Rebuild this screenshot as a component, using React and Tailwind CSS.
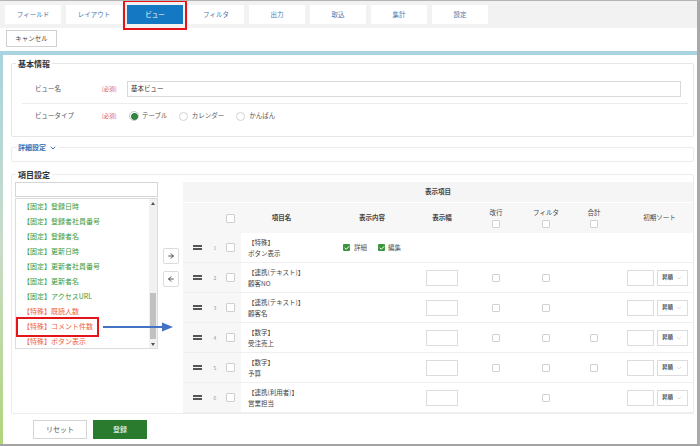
import React from "react";
import { ArrowRight, ArrowLeft, ChevronDown, Check } from "lucide-react";

const cols =
  "grid grid-cols-[27px_10px_21px_81px_100px_40px_68px_32px_64px_67px]";

const tabs = ["フィールド", "レイアウト", "ビュー", "フィルタ", "出力", "取込", "集計", "設定"];

const fixedItems = ["登録日時", "登録者社員番号", "登録者名", "更新日時", "更新者社員番号", "更新者名", "アクセスURL"];
const specialItems = ["既読人数", "コメント件数", "ボタン表示"];

const rows = [
  { n: 1, type: "【特殊】", name: "ボタン表示", content: true },
  { n: 2, type: "【連携(テキスト)】", name: "顧客NO", width: true, wrap: true, filter: true, sort: true },
  { n: 3, type: "【連携(テキスト)】", name: "顧客名", width: true, wrap: true, filter: true, sort: true },
  { n: 4, type: "【数字】", name: "受注売上", width: true, wrap: true, filter: true, sum: true, sort: true },
  { n: 5, type: "【数字】", name: "予算", width: true, wrap: true, filter: true, sum: true, sort: true },
  { n: 6, type: "【連携(利用者)】", name: "営業担当", width: true, filter: true, sort: true },
];

function Box({ big }) {
  return (
    <span
      className={
        big
          ? "block w-[9px] h-[9px] border border-[#cfcfcf] bg-white rounded-[1px]"
          : "block w-[8px] h-[8px] border border-[#d2d2d2] bg-white rounded-[1px]"
      }
    />
  );
}

function GreenCheck() {
  return (
    <span className="flex items-center justify-center w-[7px] h-[7px] bg-[#3a963c] rounded-[1px]">
      <Check className="w-[6px] h-[6px] text-white" strokeWidth={4} />
    </span>
  );
}

function Radio({ on }) {
  return on ? (
    <span className="flex items-center justify-center w-[10px] h-[10px] rounded-full border border-[#c8c8c8] bg-white">
      <span className="block w-[7px] h-[7px] rounded-full bg-[#2f8a3c] border border-[#24702f]" />
    </span>
  ) : (
    <span className="block w-[9px] h-[9px] rounded-full border border-[#d4d4d4] bg-white" />
  );
}

function Required() {
  return <span className="w-[25px] text-[5.5px] text-[#d9534f]">[必須]</span>;
}

export default function App() {
  return (
    <div className="w-[700px] h-[446px] overflow-hidden bg-white flex flex-col border-t border-t-[#b4b4b4] border-r-[3px] border-r-[#a9a9a9] border-b-[2px] border-b-[#a3a3a3] font-['Noto_Sans_CJK_JP','Noto_Sans',sans-serif] text-[#555]">
      {/* Tabs */}
      <div className="h-[27px] shrink-0 bg-[#f2f2f2] pl-[5px] pt-[4px] flex items-start gap-[5px]">
        {tabs.map((t) =>
          t === "ビュー" ? (
            <div key={t} className="relative w-[56px] h-[19px] bg-[#1479c2] text-white text-[6.5px] flex items-center justify-center">
              {t}
              <span className="absolute -left-[4px] -right-[4px] -top-[5px] -bottom-[6px] border-2 border-[#e3151a]" />
            </div>
          ) : (
            <div key={t} className="w-[56px] h-[19px] bg-white text-[#5474a8] text-[6.5px] flex items-center justify-center">
              {t}
            </div>
          )
        )}
      </div>

      {/* Cancel */}
      <div className="h-[23px] shrink-0 pl-[6px] pt-[2px] flex items-start">
        <button className="w-[51px] h-[17px] border border-[#d0d0d0] bg-white text-[6.5px] leading-[15px] text-[#444]">
          キャンセル
        </button>
      </div>

      {/* Panel */}
      <div className="flex-1 flex bg-gradient-to-b from-[#a9d3df] via-[#c9dcc8] to-[#b1d47a] pl-[3px] pt-[4px]">
        <div className="flex-1 bg-white flex flex-col">
          {/* 基本情報 */}
          <fieldset className="ml-[8px] mr-[3px] mt-[2px] border border-[#e6e6e6] rounded-[2px]">
            <legend className="ml-[4px] px-[2px] text-[8px] leading-[13px] font-bold text-[#333]">基本情報</legend>
            <div className="mx-[10px] mr-[5px] pt-[11px] pb-[6px] border-b border-[#ececec] flex items-center">
              <span className="pl-[13px] w-[80px] text-[6.5px]">ビュー名</span>
              <Required />
              <div className="flex-1 mr-[7px] h-[16px] border border-[#d9d9d9] flex items-center pl-[3px] text-[6.5px] text-[#333]">
                基本ビュー
              </div>
            </div>
            <div className="mx-[10px] h-[32px] pt-[7px] flex items-start">
              <div className="h-[10px] flex items-center">
                <span className="pl-[13px] w-[80px] text-[6.5px]">ビュータイプ</span>
                <Required />
                <div className="ml-[2px] flex items-center text-[6.5px] text-[#555]">
                  <Radio on />
                  <span className="ml-[3px]">テーブル</span>
                  <span className="ml-[11px]"><Radio /></span>
                  <span className="ml-[4px]">カレンダー</span>
                  <span className="ml-[12px]"><Radio /></span>
                  <span className="ml-[4px]">かんばん</span>
                </div>
              </div>
            </div>
          </fieldset>

          {/* 詳細設定 */}
          <fieldset className="ml-[8px] mr-[3px] mt-[4px] border border-[#ececec] rounded-[2px]">
            <legend className="ml-[4px] px-[2px] text-[7px] leading-[13px] font-bold text-[#3a6fb3] flex items-center gap-[3px]">
              詳細設定
              <ChevronDown className="w-[8px] h-[8px]" strokeWidth={3} />
            </legend>
            <div className="h-[7px]" />
          </fieldset>

          {/* 項目設定 */}
          <fieldset className="ml-[8px] mr-[3px] mt-[6px] border border-[#ececec] rounded-[2px]">
            <legend className="ml-[4px] px-[2px] text-[8px] leading-[13px] font-bold text-[#333]">項目設定</legend>
            <div className="flex">
              {/* left list */}
              <div className="ml-[3px] w-[143px] pt-[1px]">
                <div className="h-[15px] border border-[#d6d6d6] bg-white" />
                <div className="mt-[1px] h-[151px] border border-[#dcdcdc] flex">
                  <div className="flex-1 text-[7px] leading-[15px]">
                    {fixedItems.map((t) => (
                      <div key={t} className="pl-[7px] text-[#3a9a3a]">【固定】{t}</div>
                    ))}
                    {specialItems.map((t) => (
                      <div key={t} className="relative pl-[7px] text-[#f0643a]">
                        【特殊】{t}
                        {t === "コメント件数" && (
                          <>
                            <span className="absolute left-0 -top-[2px] -bottom-[3px] w-[83px] border-2 border-[#e3151a]" />
                            <svg className="absolute left-[87px] top-[3px] z-10" width="70" height="10" viewBox="0 0 70 10">
                              <line x1="0" y1="5" x2="60" y2="5" stroke="#4472c4" strokeWidth="2" />
                              <polygon points="59,0.5 70,5 59,9.5" fill="#4472c4" />
                            </svg>
                          </>
                        )}
                      </div>
                    ))}
                  </div>
                  <div className="w-[8px] bg-[#f1f1f1] flex flex-col">
                    <div className="h-[8px] flex items-center justify-center">
                      <span className="w-0 h-0 border-l-[2.5px] border-r-[2.5px] border-b-[3px] border-l-transparent border-r-transparent border-b-[#505050]" />
                    </div>
                    <div className="flex-1 flex flex-col justify-end px-[1px]">
                      <div className="h-[46px] bg-[#c1c1c1] mb-[1px]" />
                    </div>
                    <div className="h-[8px] flex items-center justify-center">
                      <span className="w-0 h-0 border-l-[2.5px] border-r-[2.5px] border-t-[3px] border-l-transparent border-r-transparent border-t-[#505050]" />
                    </div>
                  </div>
                </div>
              </div>

              {/* move buttons */}
              <div className="ml-[5px] w-[16px] pt-[67px] flex flex-col gap-[7px]">
                <div className="w-[16px] h-[16px] border border-[#dcdcdc] rounded-[2px] bg-white flex items-center justify-center">
                  <ArrowRight className="w-[8px] h-[8px] text-[#333]" strokeWidth={2.5} />
                </div>
                <div className="w-[16px] h-[16px] border border-[#dcdcdc] rounded-[2px] bg-white flex items-center justify-center">
                  <ArrowLeft className="w-[8px] h-[8px] text-[#333]" strokeWidth={2.5} />
                </div>
              </div>

              {/* table */}
              <div className="ml-[4px] w-[510px] pt-[1px] text-[6.5px]">
                <div className="h-[21px] bg-[#f5f5f5] border-b border-white flex items-center justify-center text-[#444] font-bold">
                  表示項目
                </div>
                <div className={`${cols} h-[30px] bg-[#f7f7f7] items-center text-[#444] font-bold`}>
                  <div />
                  <div />
                  <div className="flex justify-center"><Box big /></div>
                  <div className="text-center">項目名</div>
                  <div className="text-center">表示内容</div>
                  <div className="text-center">表示幅</div>
                  <div className="flex flex-col items-center gap-[3px] font-normal">
                    <span>改行</span>
                    <Box />
                  </div>
                  <div className="flex flex-col items-center gap-[3px] font-normal">
                    <span>フィルタ</span>
                    <Box />
                  </div>
                  <div className="flex flex-col items-center gap-[3px] font-normal">
                    <span>合計</span>
                    <Box />
                  </div>
                  <div className="text-center font-normal">初期ソート</div>
                </div>
                {rows.map((r) => (
                  <div key={r.n} className={`${cols} h-[30px] border-b border-[#efefef]`}>
                    <div className="bg-[#f7f7f7] flex flex-col items-center justify-center gap-[1.5px] pl-[2px]">
                      <span className="block w-[9px] h-[2px] bg-[#555]" />
                      <span className="block w-[9px] h-[2px] bg-[#555]" />
                    </div>
                    <div className="bg-[#f7f7f7] flex items-center justify-center text-[5px] text-[#999]">{r.n}</div>
                    <div className="bg-[#f7f7f7] flex items-center justify-center"><Box big /></div>
                    <div className="pl-[7px] flex flex-col justify-center leading-[11px] text-[#444]">
                      <span>{r.type}</span>
                      <span>{r.name}</span>
                    </div>
                    <div className="flex items-center justify-center">
                      {r.content && (
                        <div className="flex items-center text-[#555]">
                          <GreenCheck />
                          <span className="ml-[4px]">詳細</span>
                          <span className="ml-[11px]"><GreenCheck /></span>
                          <span className="ml-[3px]">編集</span>
                        </div>
                      )}
                    </div>
                    <div className="flex items-center justify-center">
                      {r.width && <span className="block w-[32px] h-[16px] border border-[#dcdcdc] bg-white" />}
                    </div>
                    <div className="flex items-center justify-center">{r.wrap && <Box />}</div>
                    <div className="flex items-center justify-center">{r.filter && <Box />}</div>
                    <div className="flex items-center justify-center">{r.sum && <Box />}</div>
                    <div className="flex items-center pl-[1px] gap-[3px]">
                      {r.sort && (
                        <>
                          <span className="block w-[27px] h-[16px] border border-[#dcdcdc] bg-white" />
                          <span className="w-[31px] h-[16px] border border-[#dcdcdc] bg-white flex items-center pl-[4px] gap-[2px]">
                            <span className="text-[5.5px] font-bold text-[#555]">昇順</span>
                            <ChevronDown className="w-[8px] h-[8px] text-[#c4c4c4]" strokeWidth={1.5} />
                          </span>
                        </>
                      )}
                    </div>
                  </div>
                ))}
              </div>
            </div>
          </fieldset>

          {/* footer buttons */}
          <div className="pl-[30px] pt-[6px] flex gap-[6px]">
            <button className="w-[54px] h-[19px] border border-[#d4d4d4] bg-white text-[7px] text-[#555]">リセット</button>
            <button className="w-[54px] h-[19px] bg-[#2b7b2f] text-[7px] text-white">登録</button>
          </div>
        </div>
      </div>
    </div>
  );
}
